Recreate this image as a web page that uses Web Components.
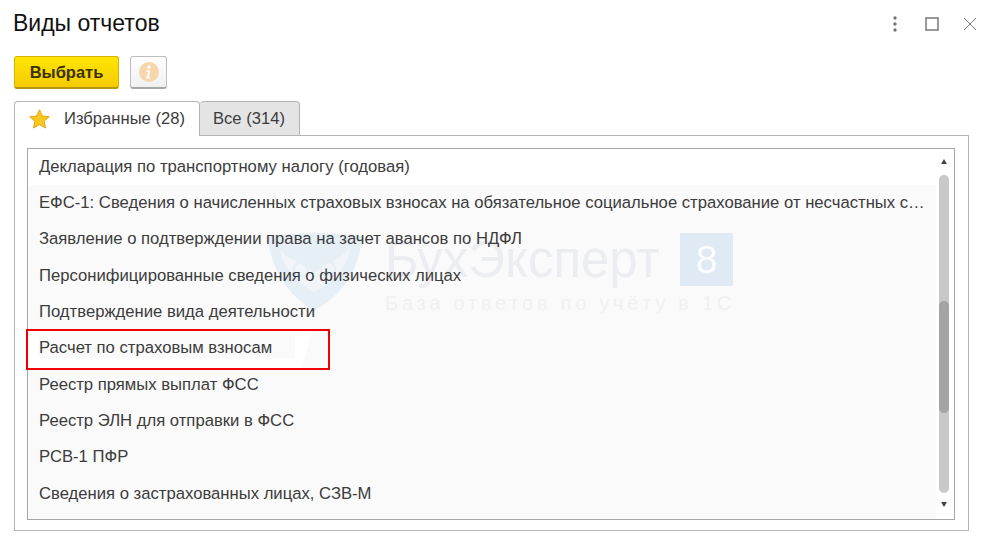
<!DOCTYPE html>
<html lang="ru">
<head>
<meta charset="utf-8">
<title>Виды отчетов</title>
<style>
  html, body { margin: 0; height: 100%; background: #fff; }
  body { font-family: "Liberation Sans", Arial, sans-serif; overflow: hidden; }
</style>
</head>
<body>
<report-window>
  <window-head slot="head">Виды отчетов</window-head>
  <action-bar slot="actions"></action-bar>
  <tab-strip slot="tabs"></tab-strip>
  <report-list slot="list">
    <report-row first>Декларация по транспортному налогу (годовая)</report-row>
    <report-row>ЕФС-1: Сведения о начисленных страховых взносах на обязательное социальное страхование от несчастных случаев на производстве</report-row>
    <report-row>Заявление о подтверждении права на зачет авансов по НДФЛ</report-row>
    <report-row>Персонифицированные сведения о физических лицах</report-row>
    <report-row>Подтверждение вида деятельности</report-row>
    <report-row marked>Расчет по страховым взносам</report-row>
    <report-row>Реестр прямых выплат ФСС</report-row>
    <report-row>Реестр ЭЛН для отправки в ФСС</report-row>
    <report-row>РСВ-1 ПФР</report-row>
    <report-row>Сведения о застрахованных лицах, СЗВ-М</report-row>
  </report-list>
</report-window>

<script>
customElements.define("report-window", class extends HTMLElement {
  constructor() {
    super();
    this.attachShadow({ mode: "open" }).innerHTML = `
      <style>
        :host { display: block; width: 987px; height: 538px; box-sizing: border-box; padding: 0 18px 8px 14px; }
        .panel { border: 1px solid #b4b4b4; margin-top: -1px; padding: 12px 13px 10px 12px; height: 396px; box-sizing: border-box; }
      </style>
      <slot name="head"></slot>
      <slot name="actions"></slot>
      <slot name="tabs"></slot>
      <div class="panel"><slot name="list"></slot></div>
    `;
  }
});

customElements.define("window-head", class extends HTMLElement {
  constructor() {
    super();
    this.attachShadow({ mode: "open" }).innerHTML = `
      <style>
        :host { display: flex; align-items: center; justify-content: space-between; height: 46px; margin-left: -1px; margin-right: -8px; color: #111; }
        .title { font-size: 23px; line-height: 46px; }
        .btns { display: flex; align-items: center; gap: 24px; padding-top: 1px; }
        svg { display: block; }
      </style>
      <div class="title"><slot></slot></div>
      <div class="btns">
        <svg width="12" height="16" viewBox="0 0 12 16"><g fill="#777"><circle cx="6" cy="2" r="1.7"/><circle cx="6" cy="8" r="1.7"/><circle cx="6" cy="14" r="1.7"/></g></svg>
        <svg width="14" height="14" viewBox="0 0 14 14"><rect x="1" y="1" width="12" height="12" fill="#fff" stroke="#777" stroke-width="1.5"/></svg>
        <svg width="14" height="14" viewBox="0 0 14 14"><path d="M1 1 L13 13 M13 1 L1 13" stroke="#777" stroke-width="1" fill="none"/></svg>
      </div>
    `;
  }
});

customElements.define("action-bar", class extends HTMLElement {
  constructor() {
    super();
    this.attachShadow({ mode: "open" }).innerHTML = `
      <style>
        :host { display: flex; gap: 11px; height: 33px; margin-top: 10px; margin-bottom: 12px; }
        .pick { width: 105px; box-sizing: border-box; border: 1px solid #d8b400; border-bottom: 2px solid #b4960f; border-radius: 3px;
                background: linear-gradient(#ffe500, #f6cb00); font: bold 16.5px "Liberation Sans", Arial, sans-serif; color: #3a3100; padding: 0; }
        .info { width: 37px; box-sizing: border-box; border: 1px solid #bdbdbd; border-bottom: 2px solid #a6a6a6; border-radius: 3px;
                background: linear-gradient(#fff, #f0f0f0); padding: 0; display: flex; align-items: center; justify-content: center; }
        svg { display: block; }
      </style>
      <button class="pick">Выбрать</button>
      <button class="info">
        <svg width="20" height="20" viewBox="0 0 20 20">
          <circle cx="10" cy="10" r="10" fill="#f6d6aa"/>
          <path d="M8.6 3.6h3.3l-.5 2.9H8.1z M7.6 8.2h3.6l-1.2 6.6h1.2l-.3 1.7H6.8l.3-1.7h.9l.9-4.9H7.4z" fill="#fff"/>
        </svg>
      </button>
    `;
  }
});

customElements.define("tab-strip", class extends HTMLElement {
  constructor() {
    super();
    this.attachShadow({ mode: "open" }).innerHTML = `
      <style>
        :host { display: flex; height: 35px; position: relative; z-index: 1; font-size: 16.6px; color: #3c3c3c; }
        .tab { box-sizing: border-box; border: 1px solid #b4b4b4; border-radius: 4px 4px 0 0; display: flex; align-items: center; height: 35px; }
        .on { width: 186px; background: #fff; border-bottom: 0; padding-left: 14px; gap: 14px; }
        .off { width: 100px; background: #e4e4e4; padding-left: 13px; border-left: 0; }
        svg { display: block; flex: none; }
      </style>
      <div class="tab on">
        <svg width="21" height="20" viewBox="0 0 21 20"><path d="M10.5 .8 13.4 7 20.2 7.7 15.1 12.3 16.6 19 10.5 15.6 4.4 19 5.9 12.3 .8 7.7 7.6 7z" fill="#f9c81e" stroke="#e8a317" stroke-width="1"/></svg>
        <span>Избранные (28)</span>
      </div>
      <div class="tab off">Все (314)</div>
    `;
  }
});

customElements.define("report-list", class extends HTMLElement {
  constructor() {
    super();
    this.attachShadow({ mode: "open" }).innerHTML = `
      <style>
        :host { display: block; position: relative; box-sizing: border-box; height: 372px; border: 1px solid #a6a6a6; background: #fff; }
        .wrap { display: flex; height: 100%; }
        .rows { width: 908px; flex: none; background: #fafafa; }
        list-scroll { margin-left: 3px; }
        water-mark { position: absolute; left: 240px; top: 84px; }
      </style>
      <div class="wrap">
        <div class="rows"><slot></slot></div>
        <list-scroll></list-scroll>
      </div>
      <water-mark></water-mark>
    `;
  }
});

customElements.define("report-row", class extends HTMLElement {
  constructor() {
    super();
    this.attachShadow({ mode: "open" }).innerHTML = `
      <style>
        :host { display: block; position: relative; z-index: 1; height: 36.35px; font-size: 16.67px; line-height: 36px; color: #3c3c3c; }
        :host([first]) { background: #fff; height: 35.9px; }
        .text { display: block; position: relative; z-index: 2; width: 886px; margin-left: 11px; white-space: nowrap; overflow: hidden; text-overflow: ellipsis; }
        .box { display: none; position: absolute; z-index: 1; left: -2px; top: -1px; width: 304px; height: 41px; box-sizing: border-box; border: 2px solid #f00000;
               background: linear-gradient(#fafafa, #fafafa) 10px 5px / 257px 22px no-repeat, linear-gradient(104deg, #fff 275px, #fafafa 275px); }
        :host([marked]) .box { display: block; }
      </style>
      <div class="box"></div>
      <span class="text"><slot></slot></span>
    `;
  }
});

customElements.define("list-scroll", class extends HTMLElement {
  constructor() {
    super();
    this.attachShadow({ mode: "open" }).innerHTML = `
      <style>
        :host { display: flex; flex-direction: column; align-items: center; width: 10px; height: 100%; }
        .arrow { width: 0; height: 0; border-left: 3px solid transparent; border-right: 3px solid transparent; flex: none; }
        .up { border-bottom: 5px solid #444; margin-top: 10px; }
        .down { border-top: 5px solid #444; margin-top: 9px; }
        .track { width: 10px; height: 318px; margin-top: 11px; border-radius: 5px; background: #c8c8c8; position: relative; flex: none; }
        .thumb { position: absolute; left: 0; top: 126px; width: 10px; height: 112px; border-radius: 5px; background: #a3a3a3; }
      </style>
      <div class="arrow up"></div>
      <div class="track"><div class="thumb"></div></div>
      <div class="arrow down"></div>
    `;
  }
});

customElements.define("water-mark", class extends HTMLElement {
  constructor() {
    super();
    this.attachShadow({ mode: "open" }).innerHTML = `
      <style>
        :host { display: flex; gap: 23px; pointer-events: none; z-index: 0; }
        svg { display: block; flex: none; }
        .side { width: 348px; }
        .top { display: flex; justify-content: space-between; align-items: center; height: 53px; }
        .name { font-size: 51px; line-height: 53px; color: #ecedf1; }
        .eight { width: 53px; height: 53px; background: #dfeaf4; color: #fbfdfe; font-size: 39px; line-height: 53px; text-align: center; }
        .sub { font-size: 20px; letter-spacing: 3.75px; line-height: 24px; margin-top: 5px; color: #f0f0f3; white-space: nowrap; }
      </style>
      <svg width="94" height="78" viewBox="0 0 94 78">
        <path d="M0 3 C30 -1 64 -1 94 3 C92 36 74 62 46 78 C20 62 2 36 0 3Z" fill="#e6eff6"/>
        <path d="M12 16 C20 28 32 28 46 40 C60 28 72 28 82 14 C80 34 66 48 46 60 C28 48 14 34 12 16Z" fill="#f1f5f9"/>
        <circle cx="33" cy="36" r="7" fill="none" stroke="#e6eff6" stroke-width="2"/>
        <circle cx="60" cy="36" r="7" fill="none" stroke="#e6eff6" stroke-width="2"/>
      </svg>
      <div class="side">
        <div class="top"><span class="name">БухЭксперт</span><span class="eight">8</span></div>
        <div class="sub">База ответов по учёту в 1С</div>
      </div>
    `;
  }
});
</script>
</body>
</html>
